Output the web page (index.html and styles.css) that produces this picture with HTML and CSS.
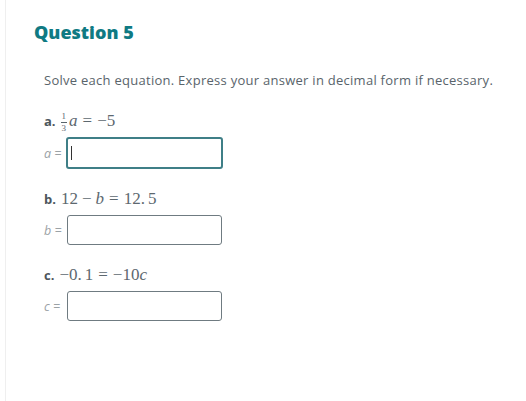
FILE: index.html
```html
<!DOCTYPE html>
<html>
<head>
<meta charset="utf-8">
<link rel="stylesheet" href="styles.css">
</head>
<body>
<div class="frame">
  <h1 class="title">Question 5</h1>
  <div class="body">
    <p class="prompt">Solve each equation. Express your answer in decimal form if necessary.</p>
    <div class="part">
      <div class="eq"><span class="letter">a.</span><span class="math"><span class="frac"><span class="num">1</span><span class="den">3</span></span><i>a</i><span class="rel">=</span>−5</span></div>
      <div class="answer"><span class="lab">a =</span><div class="box focused"><span class="caret"></span></div></div>
    </div>
    <div class="part">
      <div class="eq"><span class="letter">b.</span><span class="math">12<span class="bin">−</span><i>b</i><span class="rel">=</span>12.<span class="pt"></span>5</span></div>
      <div class="answer"><span class="lab">b =</span><div class="box"></div></div>
    </div>
    <div class="part">
      <div class="eq"><span class="letter">c.</span><span class="math">−0.<span class="pt"></span>1<span class="rel">=</span>−10<i>c</i></span></div>
      <div class="answer"><span class="lab">c =</span><div class="box"></div></div>
    </div>
  </div>
</div>
</body>
</html>
```
FILE: styles.css
```css
html, body {
  margin: 0;
  padding: 0;
  background: #fff;
}
.frame {
  margin-left: 5px;
  border-left: 1px solid #efefef;
  min-height: 401px;
  box-sizing: border-box;
  padding: 21px 0 0 28px;
  font-family: "Open Sans", Lato, sans-serif;
}
.title {
  margin: 0;
  font-size: 18px;
  font-weight: 800;
  color: #0f7a83;
  line-height: 22px;
}
.body {
  padding-left: 10px;
}
.prompt {
  margin: 28px 0 0 0;
  font-size: 13px;
  letter-spacing: 0.27px;
  color: #59646b;
  line-height: 18px;
  white-space: nowrap;
}
.part {
  margin-top: 21px;
}
.part + .part {
  margin-top: 19px;
}
.eq {
  display: flex;
  align-items: baseline;
  gap: 5px;
  height: 22px;
  line-height: 22px;
}
.letter {
  font-weight: 700;
  font-size: 13px;
  color: #4d565c;
}
.math {
  font-family: "Liberation Serif", "DejaVu Serif", serif;
  font-size: 17px;
  color: #5d686f;
  white-space: nowrap;
}
.math i {
  font-style: italic;
}
.rel {
  margin: 0 5px;
}
.bin {
  margin: 0 4px;
}
.pt {
  display: inline-block;
  width: 3px;
}
.frac {
  display: inline-block;
  vertical-align: -5px;
  text-align: center;
  font-size: 9px;
  line-height: 9px;
  margin-right: 2px;
}
.frac .num,
.frac .den {
  display: block;
}
.frac .num {
  border-bottom: 1px solid #59646b;
  padding: 0 1px 1px;
}
.frac .den {
  padding-top: 1px;
}
.answer {
  display: flex;
  align-items: center;
  margin-top: 5px;
}
.lab {
  font-style: italic;
  font-size: 12.5px;
  color: #9ba2a6;
  width: 23px;
  white-space: nowrap;
}
.box {
  width: 153px;
  height: 28px;
  border: 1px solid #6f7b81;
  border-radius: 3px;
  display: flex;
  align-items: center;
}
.box.focused {
  border: 2px solid #3f7f87;
  margin-left: -1px;
}
.caret {
  display: block;
  width: 1px;
  height: 14px;
  background: #333;
  margin-left: 3px;
}
```
